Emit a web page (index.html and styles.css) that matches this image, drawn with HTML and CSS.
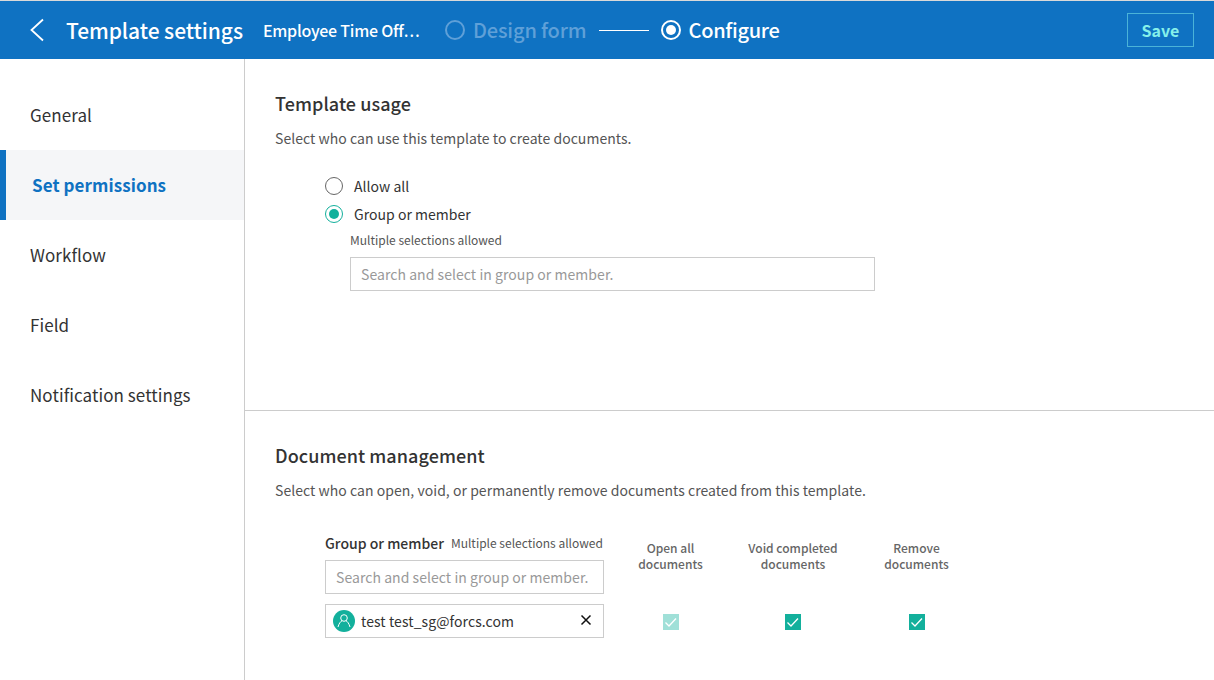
FILE: index.html
```html
<!DOCTYPE html>
<html lang="en">
<head>
<meta charset="utf-8">
<title>Template settings</title>
<link rel="stylesheet" href="styles.css">
</head>
<body>
<div class="app">
  <header class="topbar">
    <svg class="back" width="16" height="24" viewBox="0 0 16 24"><path d="M14 1.500 L2.500 12 L14 22.500" fill="none" stroke="#fff" stroke-width="1.800"/></svg>
    <h1 class="page-title">Template settings</h1>
    <div class="doc-name">Employee Time Off<span class="doc-ell">…</span></div>
    <div class="step step-off"><span class="step-ring"></span>Design form</div>
    <span class="step-line"></span>
    <div class="step step-on"><span class="step-ring"><span class="step-dot"></span></span>Configure</div>
    <button class="save">Save</button>
  </header>
  <div class="body">
    <nav class="side">
      <a class="side-item">General</a>
      <a class="side-item active">Set permissions</a>
      <a class="side-item">Workflow</a>
      <a class="side-item">Field</a>
      <a class="side-item">Notification settings</a>
    </nav>
    <main class="main">
      <section class="usage">
        <h2 class="sec-title">Template usage</h2>
        <p class="sec-desc">Select who can use this template to create documents.</p>
        <div class="usage-form">
          <label class="radio-row"><span class="radio"></span>Allow all</label>
          <label class="radio-row"><span class="radio on"><span class="radio-dot"></span></span>Group or member</label>
          <div class="multi">Multiple selections allowed</div>
          <div class="field wide">Search and select in group or member.</div>
        </div>
      </section>
      <section class="mgmt">
        <h2 class="sec-title">Document management</h2>
        <p class="sec-desc">Select who can open, void, or permanently remove documents created from this template.</p>
        <div class="grid">
          <div class="col-member">
            <div class="member-head"><b class="member-label">Group or member</b><span class="member-note">Multiple selections allowed</span></div>
            <div class="field narrow">Search and select in group or member.</div>
            <div class="field chip">
              <span class="avatar"><svg width="22" height="22" viewBox="0 0 22 22"><circle cx="11" cy="8" r="3.300" fill="none" stroke="#fff" stroke-width="1"/><path d="M5 17 C6 13.500 7.500 11.500 9 10.700 M17 17 C16 13.500 14.500 11.500 13 10.700" fill="none" stroke="#fff" stroke-width="1"/></svg></span>
              <span class="chip-text">test test_sg@forcs.com</span>
              <svg class="chip-x" width="12" height="12" viewBox="0 0 12 12"><path d="M1.500 1.500 L10.500 10.500 M10.500 1.500 L1.500 10.500" stroke="#111" stroke-width="1.500"/></svg>
            </div>
          </div>
          <div class="col-perm c1">
            <div class="perm-head">Open all<br>documents</div>
            <span class="check dim"><svg width="16" height="16" viewBox="0 0 16 16"><path d="M2.500 8.500 L6 12 L13 4.500" fill="none" stroke="#fff" stroke-width="1.300"/></svg></span>
          </div>
          <div class="col-perm c2">
            <div class="perm-head">Void completed<br>documents</div>
            <span class="check"><svg width="16" height="16" viewBox="0 0 16 16"><path d="M2.500 8.500 L6 12 L13 4.500" fill="none" stroke="#fff" stroke-width="1.300"/></svg></span>
          </div>
          <div class="col-perm c3">
            <div class="perm-head">Remove<br>documents</div>
            <span class="check"><svg width="16" height="16" viewBox="0 0 16 16"><path d="M2.500 8.500 L6 12 L13 4.500" fill="none" stroke="#fff" stroke-width="1.300"/></svg></span>
          </div>
        </div>
      </section>
    </main>
  </div>
</div>
</body>
</html>
```
FILE: styles.css
```css
* { box-sizing: border-box; }
html, body { margin: 0; padding: 0; height: 100%; overflow: hidden; background: #fff; }
body { font-family: "Noto Sans CJK KR", "Noto Sans", sans-serif; color: #333; }
.app { width: 1214px; height: 680px; display: flex; flex-direction: column; }

.topbar { height: 59px; flex: none; background: #0f72c2; border-top: 1px solid #d9d9d9; display: flex; align-items: center; color: #fff; padding-left: 29px; padding-right: 20px; }
.back { flex: none; }
.page-title { margin: 0 0 0 21px; font-size: 21px; font-weight: 500; line-height: 30px; letter-spacing: -0.06px; white-space: nowrap; }
.doc-name { margin-left: 20px; width: 158px; font-size: 16px; font-weight: 500; white-space: nowrap; letter-spacing: -0.25px; }
.doc-ell { font-family: "Noto Sans CJK SC", sans-serif; font-size: 15px; letter-spacing: 0; }
.step { display: flex; align-items: center; font-size: 20px; font-weight: 500; line-height: 28px; white-space: nowrap; }
.step-off { margin-left: 24px; color: #5fa0d8; letter-spacing: -0.15px; }
.step-ring { width: 20px; height: 20px; border-radius: 50%; border: 2px solid currentColor; margin-right: 8px; display: flex; align-items: center; justify-content: center; flex: none; }
.step-dot { width: 10px; height: 10px; border-radius: 50%; background: #fff; }
.step-line { width: 50px; height: 1px; background: #fff; margin-left: 12px; }
.step-on { margin-left: 12px; color: #fff; letter-spacing: -0.3px; }
.save { margin-left: auto; width: 67px; height: 34px; background: transparent; border: 1px solid #4ab3d8; color: #86f0ea; font: 700 16px "Noto Sans CJK KR", sans-serif; padding: 0; }

.body { flex: 1; display: flex; min-height: 0; }
.side { width: 245px; flex: none; border-right: 1px solid #ccc; padding-top: 21px; }
.side-item { display: flex; align-items: center; height: 70px; padding: 0 0 2px 30px; font-size: 17px; letter-spacing: 0.07px; color: #333; }
.side-item.active { background: #f5f6f8; border-left: 6px solid #0f72c2; padding-left: 26px; color: #0f72c2; font-weight: 700; }

.main { flex: 1; min-width: 0; }
.usage { height: 352px; border-bottom: 1px solid #ccc; padding: 31px 0 0 30px; }
.mgmt { padding: 31px 0 0 30px; }
.sec-title { margin: 0; font-size: 18px; font-weight: 500; line-height: 26px; letter-spacing: 0.07px; color: #333; }
.sec-desc { margin: 12px 0 0; font-size: 14px; line-height: 20px; letter-spacing: 0.04px; color: #555; }

.usage-form { margin: 24px 0 0 50px; }
.radio-row { display: flex; align-items: center; height: 28px; font-size: 14px; letter-spacing: 0.03px; color: #333; }
.radio { width: 18px; height: 18px; border: 1px solid #666; border-radius: 50%; margin-right: 11px; display: flex; align-items: center; justify-content: center; flex: none; }
.radio.on { border-color: #13b09c; }
.radio-dot { width: 10px; height: 10px; border-radius: 50%; background: #13b09c; }
.multi { margin: 3px 0 0 25px; font-size: 12px; line-height: 18px; color: #555; }
.field { border: 1px solid #ccc; display: flex; align-items: center; font-size: 14px; letter-spacing: 0.05px; color: #999; padding-left: 10px; }
.wide { margin: 8px 0 0 25px; width: 525px; height: 34px; }

.grid { display: flex; margin: 30px 0 0 50px; align-items: flex-start; }
.col-member { width: 279px; flex: none; }
.member-head { display: flex; align-items: center; height: 24px; margin-top: 1px; white-space: nowrap; }
.member-label { font-size: 14px; font-weight: 500; color: #333; }
.member-note { margin: 0 0 2px 7px; font-size: 12px; color: #555; }
.narrow { margin-top: 5px; height: 34px; white-space: nowrap; }
.chip { margin-top: 10px; height: 34px; padding-left: 7px; color: #333; }
.avatar { width: 22px; height: 22px; border-radius: 50%; background: #13b09c; flex: none; display: block; margin-right: 6px; }
.avatar svg { display: block; }
.chip-text { font-size: 14px; letter-spacing: 0.09px; color: #333; }
.chip-x { margin-left: auto; margin-right: 11px; margin-top: -2px; }
.col-perm { display: flex; flex-direction: column; align-items: center; flex: none; }
.perm-head { font-size: 12px; line-height: 16px; font-weight: 500; color: #666; text-align: center; height: 67px; padding-top: 10px; margin-bottom: 17px; white-space: nowrap; }
.c1 .perm-head, .c3 .perm-head { padding-right: 1px; }
.c1 { width: 134px; }
.c2 { width: 110px; }
.c3 { width: 138px; }
.check { width: 16px; height: 16px; background: #13b09c; display: block; }
.check svg { display: block; }
.check.dim { background: #a0e0d8; }
```
